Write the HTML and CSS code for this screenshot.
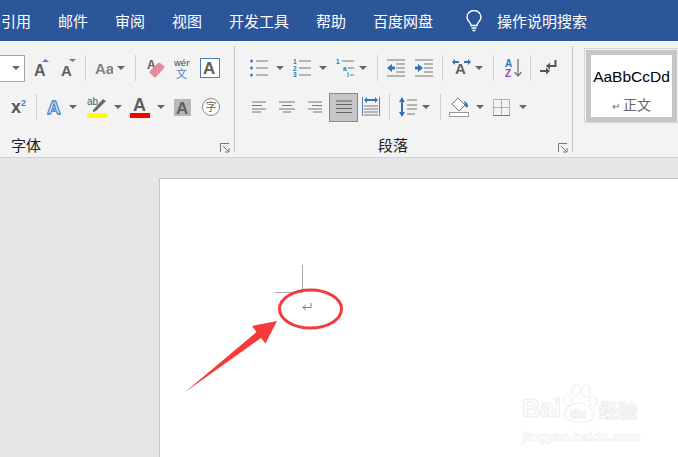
FILE: index.html
```html
<!DOCTYPE html>
<html lang="zh">
<head>
    <meta charset="UTF-8">
    <title>Word</title>
    <link rel="stylesheet" href="styles.css">
</head>
<body>
    <div class="tabs">
        <span>引用</span>
        <span>邮件</span>
        <span>审阅</span>
        <span>视图</span>
        <span>开发工具</span>
        <span>帮助</span>
        <span>百度网盘</span>
        <svg class="bulb" width="16" height="22" viewBox="0 0 16 22" fill="none" stroke="#fff" stroke-width="1.4">
            <path d="M5 15.500C5 12.500 1 11 1 7a7 6.500 0 0 1 14 0c0 4-4 5.500-4 8.500z"/>
            <path d="M5.500 18h5M6.500 20.500h3"/>
        </svg>
        <span class="search">操作说明搜索</span>
    </div>

    <div class="ribbon">
        <!-- 字体 -->
        <div class="group font-group">
            <div class="row">
                <div class="select"><i class="caret"></i></div>
                <svg class="m9" width="15" height="20" viewBox="0 0 15 20"><text class="ico" x="0" y="18" font-size="16">A</text><path d="M8 4l3.500-3L15 4z" fill="#4a7ebb"/></svg>
                <svg class="m12" width="15" height="20" viewBox="0 0 15 20"><text class="ico" x="0" y="18" font-size="15">A</text><path d="M8 1h7l-3.500 3z" fill="#4a7ebb"/></svg>
                <i class="sep m9"></i>
                <svg class="m9" width="18" height="20" viewBox="0 0 18 20"><text class="ico light" x="0" y="16" font-size="15">Aa</text></svg>
                <i class="caret m4"></i>
                <i class="sep m10"></i>
                <svg class="m11" width="18" height="22" viewBox="0 0 18 22"><text class="ico" x="0" y="12" font-size="12">A</text><path d="M3 14l8-8q1-1 2 0l4 3q1 1 0 2l-8 9q-1 1-2 0l-4-4q-1-1 0-2z" fill="#e8899a"/></svg>
                <svg class="m9" width="16" height="24" viewBox="0 0 16 24"><text class="small" x="0" y="10" font-size="9.500" fill="#444">wén</text><text class="cjk" x="2" y="22" font-size="11" fill="#4a7ebb">文</text></svg>
                <svg class="m10" width="20" height="20" viewBox="0 0 20 20"><rect x=".5" y=".5" width="19" height="19" fill="#fff" stroke="#4a7ebb"/><text class="ico" x="3" y="16" font-size="17">A</text></svg>
            </div>
            <div class="row">
                <span class="sup m11">x<sup>2</sup></span>
                <i class="sep m11"></i>
                <svg class="m10" width="15" height="22" viewBox="0 0 15 22"><text x="0" y="18" font-size="19" font-family="Liberation Sans" font-weight="700" fill="#fff" stroke="#4a86c8" stroke-width="1.300">A</text></svg>
                <i class="caret m7"></i>
                <svg class="m10" width="20" height="22" viewBox="0 0 20 22"><text class="small" x="0" y="9" font-size="10" fill="#555">ab</text><path d="M6 14l10-11 3 2-10 10-3 1z" fill="#6a6a6a"/><rect y="17" width="20" height="5" fill="#ff0"/></svg>
                <i class="caret m7"></i>
                <svg class="m8" width="20" height="22" viewBox="0 0 20 22"><text class="ico" x="3" y="15" font-size="18">A</text><rect y="17" width="20" height="5" fill="#f00"/></svg>
                <i class="caret m7"></i>
                <svg class="m9" width="17" height="21" viewBox="0 0 17 21"><rect y="2" width="17" height="17" fill="#b8b8b8"/><text class="ico" x="2" y="17" font-size="17">A</text></svg>
                <svg class="m11" width="18" height="18" viewBox="0 0 18 18"><circle cx="9" cy="9" r="8.500" fill="#fff" stroke="#888"/><text class="cjk" x="3.500" y="13" font-size="11" fill="#666">字</text></svg>
            </div>
            <div class="label-row">
                <span class="label m11">字体</span>
                <svg class="launcher" width="10" height="10" viewBox="0 0 10 10" fill="none" stroke="#777"><path d="M.5 9V.5H9"/><path d="M3 3l5.500 5.500M9 5v4H5"/></svg>
            </div>
        </div>

        <!-- 段落 -->
        <div class="group para-group">
            <div class="row">
                <svg class="m15" width="18" height="18" viewBox="0 0 18 18"><g fill="#4a7ebb"><circle cx="1.500" cy="2" r="1.500"/><circle cx="1.500" cy="9" r="1.500"/><circle cx="1.500" cy="16" r="1.500"/></g><path d="M6 2h12M6 9h12M6 16h12" stroke="#777"/></svg>
                <i class="caret m8"></i>
                <svg class="m9" width="18" height="20" viewBox="0 0 18 20"><g class="digit"><text x="0" y="5.500">1</text><text x="0" y="12.500">2</text><text x="0" y="19">3</text></g><path d="M6 3h12M6 10h12M6 17h12" stroke="#777"/></svg>
                <i class="caret m8"></i>
                <svg class="m8" width="19" height="20" viewBox="0 0 19 20"><g class="digit"><text x="1" y="5.500">1</text><text x="8" y="12.500">a</text><text x="12" y="19">i</text></g><path d="M7 3h12M13 10h6M15 17h4" stroke="#777"/></svg>
                <i class="caret m5"></i>
                <i class="sep m10"></i>
                <svg class="m9" width="18" height="18" viewBox="0 0 18 18"><path d="M0 1h18M9 5h9M9 9h9M9 13h9M0 17h18" stroke="#777"/><path d="M0 9l5-4v2.500h3v3H5V13z" fill="#2f75b5"/></svg>
                <svg class="m10" width="18" height="18" viewBox="0 0 18 18"><path d="M0 1h18M9 5h9M9 9h9M9 13h9M0 17h18" stroke="#777"/><path d="M8 9L3 5v2.500H0v3h3V13z" fill="#2f75b5"/></svg>
                <i class="sep m9"></i>
                <svg class="m9" width="19" height="24" viewBox="0 0 19 24"><path d="M0 6l3-3v2h4v2H3v2zM19 6l-3-3v2h-4v2h4v2z" fill="#2f75b5"/><text class="ico" x="3" y="18" font-size="15">A</text></svg>
                <i class="caret m4"></i>
                <i class="sep m10"></i>
                <svg class="m11" width="17" height="20" viewBox="0 0 17 20"><text x="0" y="9" font-size="10" font-family="Liberation Sans" font-weight="700" fill="#2f75b5">A</text><text x="0" y="19" font-size="10" font-family="Liberation Sans" font-weight="700" fill="#8a4fb0">Z</text><path d="M13 1v17M9.500 14l3.500 4 3.500-4" fill="none" stroke="#777" stroke-width="1.300"/></svg>
                <i class="sep m8"></i>
                <svg class="m9" width="17" height="16" viewBox="0 0 17 16"><path d="M15.500 0v6H8" fill="none" stroke="#555" stroke-width="2"/><path d="M6 6l4-3.500v7z" fill="#555"/><path d="M0 11h6" stroke="#555" stroke-width="2"/><path d="M10 11L6 7.500v7z" fill="#555"/></svg>
            </div>
            <div class="row">
                <svg class="m17" width="14" height="12" viewBox="0 0 14 12"><path d="M0 1h14M0 4.500h10M0 8h14M0 11h9" stroke="#777"/></svg>
                <svg class="m13" width="16" height="12" viewBox="0 0 16 12"><path d="M0 1h16M3 4.500h10M0 8h16M4 11h8" stroke="#777"/></svg>
                <svg class="m13" width="14" height="12" viewBox="0 0 14 12"><path d="M0 1h14M4 4.500h10M0 8h14M5 11h9" stroke="#777"/></svg>
                <div class="justify m7">
                    <svg width="16" height="14" viewBox="0 0 16 14"><path d="M0 1h16M0 4.500h16M0 8.500h16M0 12.500h16" stroke="#666"/></svg>
                </div>
                <svg class="m4" width="18" height="20" viewBox="0 0 18 20"><path d="M.5 0v19M17.500 0v19" stroke="#4a7ebb"/><path d="M2 3l3-3v2h8V0l3 3-3 3V4H5v2z" fill="#2f75b5"/><path d="M2 9h14M2 12h14M2 15h14M2 18h14" stroke="#777"/></svg>
                <i class="sep m9"></i>
                <svg class="m9" width="18" height="20" viewBox="0 0 18 20"><path d="M3 0l3 5H4v10h2l-3 5-3-5h2V5H0z" fill="#2f75b5"/><path d="M8 3h10M8 8h10M8 12h10M8 17h8" stroke="#777"/></svg>
                <i class="caret m5"></i>
                <i class="sep m10"></i>
                <svg class="m8" width="20" height="20" viewBox="0 0 20 20"><path d="M9 1l7 7-6 6-7-7z" fill="#fff" stroke="#777"/><path d="M15 4c3 1 4 3 4 6-1 1-3 0-3-2z" fill="#2f75b5"/><rect x=".5" y="15.500" width="19" height="4" fill="#fff" stroke="#999"/></svg>
                <i class="caret m7"></i>
                <svg class="m9" width="17" height="17" viewBox="0 0 17 17"><path d="M.5.500h16v16H.5zM8.500.500v16M.5 8.500h16" fill="none" stroke="#777" stroke-dasharray="1 1"/><path d="M0 16.500h17" stroke="#777"/></svg>
                <i class="caret m9"></i>
            </div>
            <div class="label-row">
                <span class="label m143">段落</span>
                <svg class="launcher" width="10" height="10" viewBox="0 0 10 10" fill="none" stroke="#777"><path d="M.5 9V.5H9"/><path d="M3 3l5.500 5.500M9 5v4H5"/></svg>
            </div>
        </div>

        <!-- 样式 -->
        <div class="styles">
            <div class="style-card">
                <div class="style-name">AaBbCcDd</div>
                <div class="style-sub"><span class="style-mark">↵</span> 正文</div>
            </div>
        </div>
    </div>

    <div class="workspace">
        <div class="page"></div>

        <svg class="marks" width="678" height="457" viewBox="0 0 678 457">
            <path d="M302.500 265v27.500H275" fill="none" stroke="#aaa"/>
            <path d="M311 303v4.500h-8M306 304.500l-3 3 3 3" fill="none" stroke="#777"/>
            <ellipse cx="310.500" cy="309" rx="31" ry="19" fill="none" stroke="#f03c3c" stroke-width="3"/>
            <path d="M184.500 392.500L256.500 332 252 326 277 321 265.500 343.500 261 338z" fill="#f63a3a"/>
        </svg>

        <div class="watermark">
            <div class="wm-top"><span class="wm-bai">Bai</span>
                <svg width="37" height="40" viewBox="0 0 37 40" fill="#fff" stroke="#ececec">
                    <ellipse cx="7" cy="17" rx="4" ry="6"/><ellipse cx="15" cy="7" rx="4" ry="6"/><ellipse cx="25" cy="8" rx="4" ry="6"/><ellipse cx="32" cy="18" rx="3.500" ry="5.500"/>
                    <path d="M3 31c0-6 9-11 15-11s15 6 15 12-6 7-15 7-15-3-15-8z"/>
                    <text x="9" y="35" font-size="13" font-family="Liberation Sans" font-weight="700">du</text>
                </svg>
                <span class="wm-cn">经验</span>
            </div>
            <div class="wm-url">jingyan.baidu.com</div>
        </div>
    </div>
</body>
</html>
```

FILE: styles.css
```css
* {
    box-sizing: border-box;
}
html, body {
    margin: 0;
    height: 100%;
    overflow: hidden;
}
body {
    width: 678px;
    height: 457px;
    display: flex;
    flex-direction: column;
    font-family: "Noto Sans CJK SC", "Liberation Sans", sans-serif;
    background: #e6e6e6;
}
.tabs {
    height: 41px;
    flex: none;
    background: #2b579a;
    color: #fff;
    font-size: 15px;
    display: flex;
    align-items: center;
    gap: 27px;
    padding-left: 1px;
    white-space: nowrap;
}
.bulb {
    margin-left: 6px;
}
.search {
    margin-left: -12px;
}
.ribbon {
    height: 117px;
    flex: none;
    background: #f3f3f3;
    border-bottom: 1px solid #d2d2d2;
    padding-top: 5px;
    display: flex;
    align-items: flex-start;
}
.group {
    height: 106px;
    padding-top: 8px;
    border-right: 1px solid #c6c6c6;
    display: flex;
    flex: none;
    flex-direction: column;
    gap: 11px;
}
.font-group {
    width: 235px;
}
.para-group {
    width: 338px;
}
.row {
    height: 28px;
    display: flex;
    align-items: center;
    flex: none;
}
.row svg {
    flex: none;
}
.label-row {
    display: flex;
    align-items: flex-end;
    height: 16px;
    margin-top: 5px;
    padding-right: 4px;
}
.label {
    font-size: 15px;
    line-height: 16px;
    color: #222;
}
.launcher {
    margin-left: auto;
}
.select {
    width: 25px;
    height: 27px;
    background: #fff;
    border: 1px solid #a5a5a5;
    border-left: none;
    display: flex;
    align-items: center;
    justify-content: flex-end;
    padding-right: 4px;
}
.caret {
    width: 0;
    height: 0;
    flex: none;
    border-left: 4px solid transparent;
    border-right: 4px solid transparent;
    border-top: 4px solid #666;
}
.sep {
    width: 1px;
    height: 26px;
    flex: none;
    background: #cfcfcf;
}
.sup {
    font: 700 18px "Liberation Sans", sans-serif;
    color: #555;
    width: 14px;
    line-height: 18px;
}
.sup sup {
    font-size: 9px;
    color: #4a7ebb;
    line-height: 0;
}
.ico {
    font-family: "Liberation Sans", sans-serif;
    font-weight: 700;
    fill: #5f5f5f;
}
.ico.light {
    fill: #808080;
}
.small {
    font-family: "Liberation Sans", sans-serif;
}
.cjk {
    font-family: "Noto Sans CJK SC", sans-serif;
}
.digit {
    font: 700 6.500px "Liberation Sans", sans-serif;
    fill: #2f75b5;
}
.justify {
    width: 29px;
    height: 29px;
    flex: none;
    background: #c6c6c6;
    border: 1px solid #8a8a8a;
    display: flex;
    align-items: center;
    justify-content: center;
}
.styles {
    width: 105px;
    height: 75px;
    margin: 2px 0 0 11px;
    border: 1px solid #d6d6d6;
    border-right: none;
    padding: 1px 3px 0 1px;
    flex: none;
}
.style-card {
    width: 91px;
    height: 72px;
    background: #fff;
    border: 5px solid #c6c6c6;
    text-align: center;
    white-space: nowrap;
}
.style-name {
    font: 15.500px/17px "Liberation Sans", sans-serif;
    color: #000;
    margin-top: 13px;
}
.style-sub {
    font-size: 14px;
    line-height: 18px;
    color: #666;
    margin-top: 10px;
}
.style-mark {
    font-size: 10px;
}
.workspace {
    flex: 1;
    padding: 20px 0 0 159px;
    display: flex;
}
.page {
    flex: 1;
    background: #fff;
    border: 1px solid #c6c6c6;
    border-width: 1px 0 0 1px;
}
.marks {
    position: absolute;
    left: 0;
    top: 0;
}
.watermark {
    position: absolute;
    left: 522px;
    top: 383px;
    width: 120px;
    color: #fff;
    -webkit-text-stroke: 1px #ececec;
    white-space: nowrap;
}
.wm-top {
    display: flex;
    align-items: flex-end;
    height: 40px;
}
.wm-bai {
    font: 700 25px/30px "Liberation Sans", sans-serif;
}
.wm-cn {
    font: 700 19px/24px "Noto Sans CJK SC", sans-serif;
    margin: 0 0 1px 1px;
}
.wm-url {
    font: 700 13.500px/15px "Liberation Sans", sans-serif;
    -webkit-text-stroke: .6px #ececec;
    margin-top: 6px;
}

.m4 { margin-left: 4px; }
.m5 { margin-left: 5px; }
.m7 { margin-left: 7px; }
.m8 { margin-left: 8px; }
.m9 { margin-left: 9px; }
.m10 { margin-left: 10px; }
.m11 { margin-left: 11px; }
.m12 { margin-left: 12px; }
.m13 { margin-left: 13px; }
.m15 { margin-left: 15px; }
.m17 { margin-left: 17px; }
.m143 { margin-left: 143px; }
```
